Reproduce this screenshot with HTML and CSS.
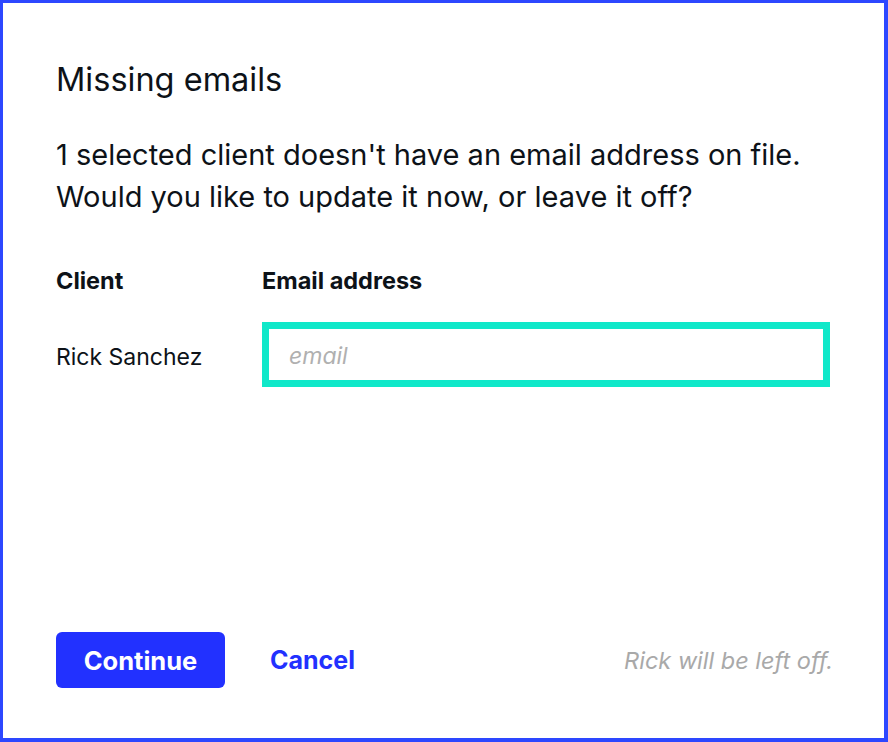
FILE: index.html
```html
<!DOCTYPE html>
<html lang="en">
<head>
  <meta charset="UTF-8">
  <title>Missing emails</title>
  <link rel="stylesheet" href="styles.css">
</head>
<body>
  <div class="dialog">
    <h1 class="dialog-title">Missing emails</h1>
    <p class="dialog-text">1 selected client doesn't have an email address on file.<br>Would you like to update it now, or leave it off?</p>

    <!-- 客户列表 -->
    <div class="client-table">
      <div class="client-head">Client</div>
      <div class="client-head">Email address</div>
      <div class="client-name">Rick Sanchez</div>
      <input class="client-email" type="text" placeholder="email">
    </div>

    <div class="dialog-footer">
      <button class="btn-primary">Continue</button>
      <button class="btn-link">Cancel</button>
      <span class="dialog-note">Rick will be left off.</span>
    </div>
  </div>
</body>
</html>
```

FILE: styles.css
```css
html, body {
  margin: 0;
  height: 100%;
}

body {
  font-family: Inter, "Liberation Sans", sans-serif;
  color: #0d1218;
  background: #fff;
}

.dialog {
  box-sizing: border-box;
  height: 100vh;
  border: 3px solid #2d47ff;
  border-right-width: 4px;
  border-bottom-width: 4px;
  padding: 60px 54px 50px 53px;
  display: flex;
  flex-direction: column;
}

.dialog-title {
  margin: 0;
  font-size: 32.5px;
  font-weight: 400;
  line-height: 34px;
}

.dialog-text {
  margin: 37px 0 0;
  font-size: 29px;
  line-height: 42px;
}

.client-table {
  display: grid;
  grid-template-columns: 206px 1fr;
  align-items: center;
  row-gap: 29px;
  margin-top: 51px;
}

.client-head {
  font-size: 23.5px;
  font-weight: 700;
  line-height: 24px;
}

.client-name {
  font-size: 23px;
  line-height: 24px;
  padding-top: 4px;
}

.client-email {
  box-sizing: border-box;
  width: 100%;
  height: 65px;
  border: 7px solid #10e8c9;
  padding: 3px 20px 0;
  font-family: inherit;
  font-size: 23px;
  outline: none;
}

.client-email::placeholder {
  color: #b0b0b0;
  font-style: italic;
}

.dialog-footer {
  margin-top: auto;
  display: flex;
  align-items: center;
}

.btn-primary {
  width: 169px;
  height: 56px;
  border: none;
  border-radius: 6px;
  background: #2231ff;
  color: #fff;
  font-family: inherit;
  font-size: 25.5px;
  font-weight: 700;
  cursor: pointer;
}

.btn-link {
  margin-left: 37px;
  padding: 0 8px;
  border: none;
  background: none;
  color: #2231ff;
  font-family: inherit;
  font-size: 25px;
  font-weight: 700;
  cursor: pointer;
}

.dialog-note {
  margin-left: auto;
  margin-right: -3px;
  color: #a9a9a9;
  font-size: 23.5px;
  font-style: italic;
}
```
